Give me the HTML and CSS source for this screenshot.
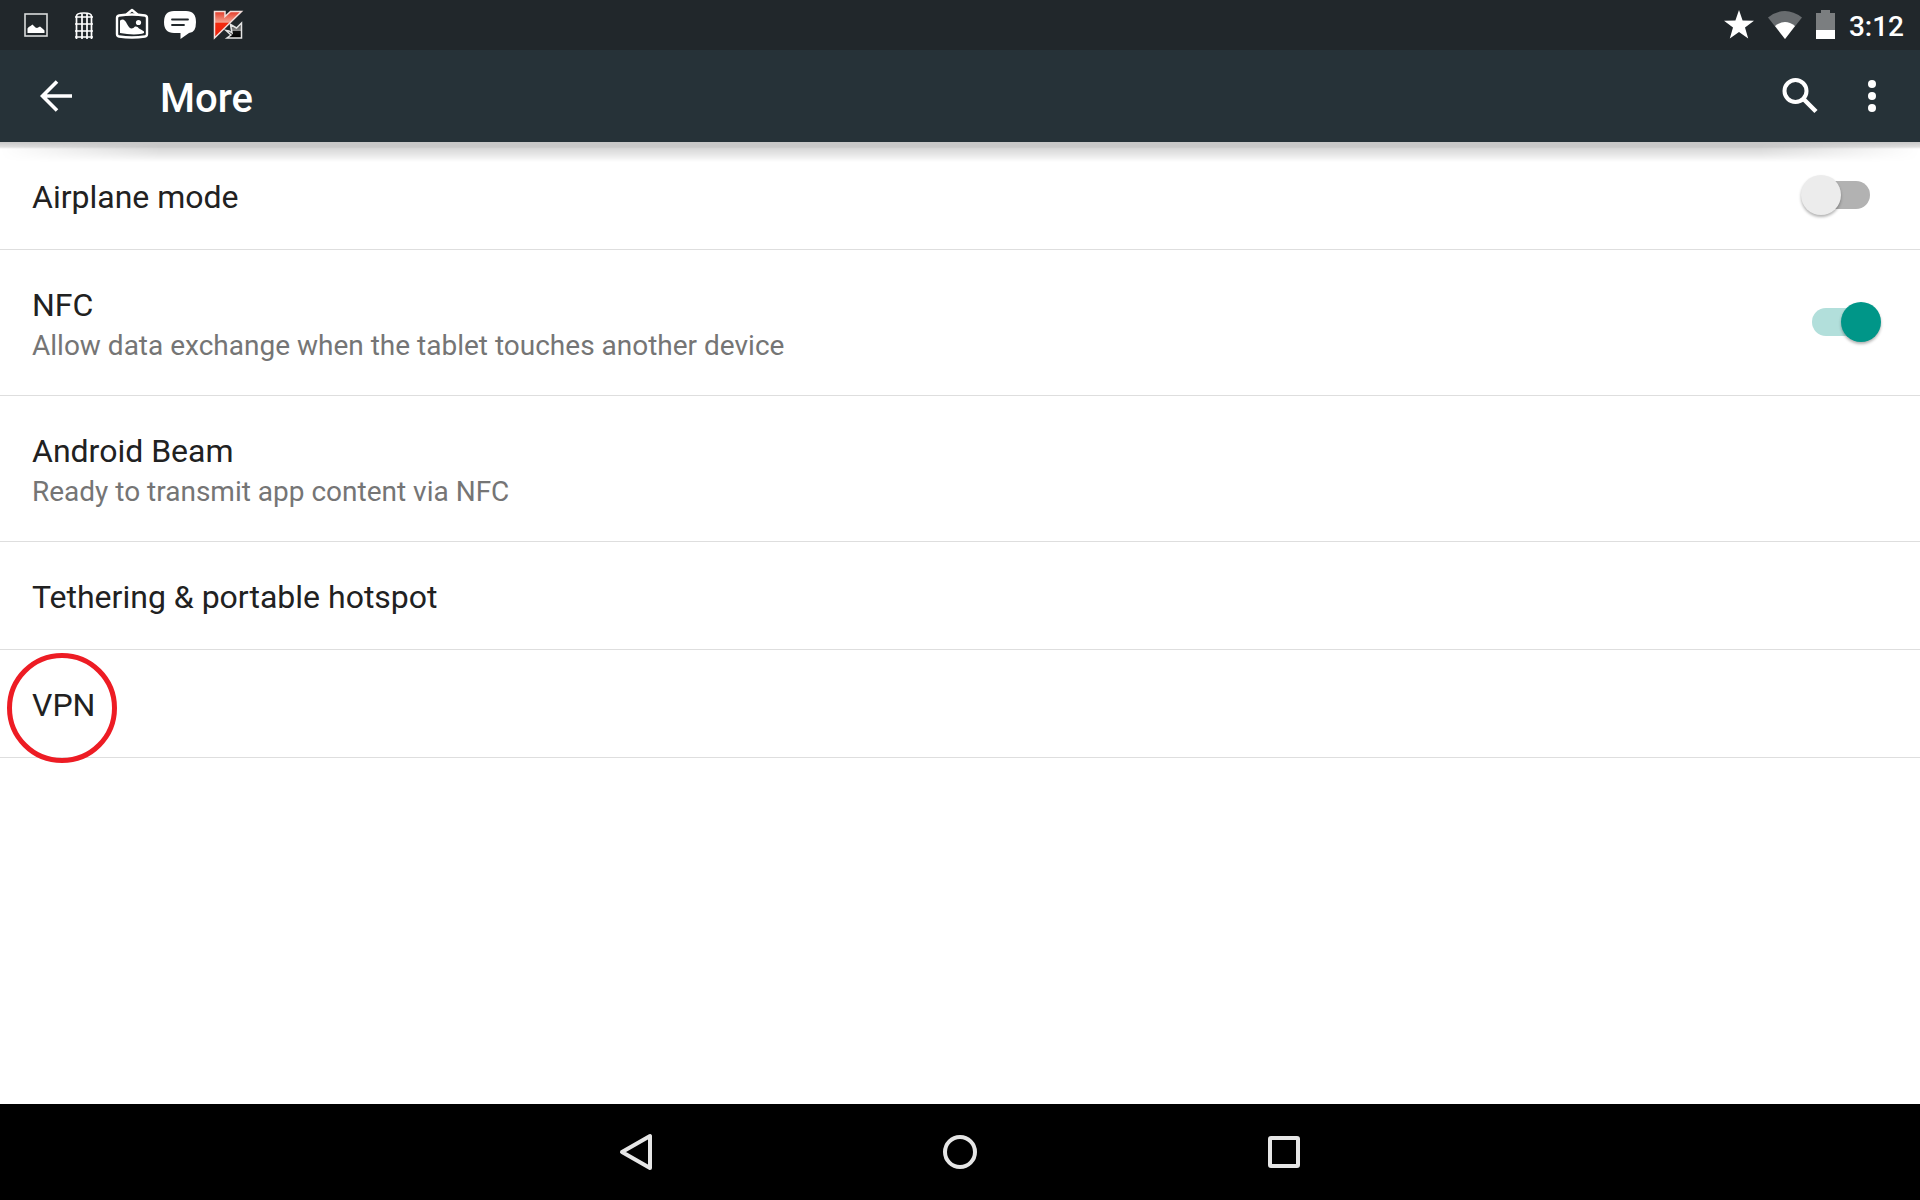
FILE: index.html
```html
<!DOCTYPE html>
<html lang="en">

<head>
    <meta charset="UTF-8">
    <meta name="viewport" content="width=device-width, initial-scale=1.0">
    <title>More</title>
    <link rel="stylesheet" href="styles.css">
</head>

<body>
    <div class="status-bar">
        <div class="notifications">
            <!-- picture -->
            <svg width="48" height="50" viewBox="0 0 48 50">
                <rect x="13" y="14" width="22" height="22" fill="none" stroke="#d9dbdb" stroke-width="1.6" />
                <path d="M15.500 33v-4.500q1-2 3-2.500l2-1.500 3 3 1.500.5 3-1.500 3 2.500 1.500 1.500V33z" fill="#fff" />
            </svg>
            <!-- phone booth -->
            <svg width="48" height="50" viewBox="0 0 48 50">
                <path d="M16.500 39V16q0-3 7.500-3t7.500 3v23M22 14v25M27 14v25M15 17h18M15 24h18M15 31h18M15 37h18" fill="none" stroke="#fff" stroke-width="1.700" />
            </svg>
            <!-- hanging picture -->
            <svg width="48" height="50" viewBox="0 0 48 50">
                <path d="M18.500 14.500l5.500-4.500 5.500 4.500" fill="none" stroke="#fff" stroke-width="2.400" stroke-linejoin="round" />
                <path d="M11 15.500q13-2 26 0 2 .3 2 2.500v16q0 2.200-2 2.500-13 2-26 0-2-.3-2-2.500V18q0-2.200 2-2.500z" fill="none" stroke="#fff" stroke-width="2.400" />
                <path d="M12 33V21q0-1.500 2.500-1.500 2.500 0 4.500 4.500 2.500 4.500 4.500 4.500t3.500-2q2.500-.5 4 2 3 1.500 5 3v1.500l-2 .8q-10 1.500-22-.8z" fill="#fff" />
                <circle cx="30.500" cy="22.500" r="2.600" fill="#fff" />
            </svg>
            <!-- message -->
            <svg width="48" height="50" viewBox="0 0 48 50">
                <path d="M18 11h12q10 0 10 11t-7 11l-8.500 6v-6H18Q8 33 8 22t10-11z" fill="#fff" />
                <path d="M16 19.500h16M16 25h12" fill="none" stroke="#21272b" stroke-width="1.800" stroke-linecap="round" />
            </svg>
            <!-- antivirus -->
            <svg width="48" height="50" viewBox="0 0 48 50">
                <defs>
                    <linearGradient id="red" x1="0" y1="0" x2="0" y2="1">
                        <stop offset="0" stop-color="#e23a28" />
                        <stop offset=".4" stop-color="#f4a08e" />
                        <stop offset=".45" stop-color="#f32a10" />
                        <stop offset="1" stop-color="#e8210c" />
                    </linearGradient>
                    <linearGradient id="dark" x1="0" y1="0" x2="0" y2="1">
                        <stop offset="0" stop-color="#333" />
                        <stop offset=".5" stop-color="#888" />
                        <stop offset=".55" stop-color="#111" />
                        <stop offset="1" stop-color="#000" />
                    </linearGradient>
                </defs>
                <path d="M10.500 11.500H21v5l5.500-5H37.500L10.500 38z" fill="url(#red)" stroke="#f3dedb" stroke-width="1.500" />
                <path d="M26.500 24.500l6 3.500 5-5V38H23l4-3-5-4.500 3 .5 3 2z" fill="url(#dark)" stroke="#e4e4e4" stroke-width="1.500" />
            </svg>
        </div>
        <div class="system">
            <svg width="30" height="50" viewBox="0 0 30 50">
                <path d="M15 10l3.600 10.600L30 20.800l-9 6.800L24.200 38.500 15 32l-9.200 6.500L9 27.600 0 20.800l11.400-.2z" fill="#fff" />
            </svg>
            <svg width="34" height="50" viewBox="0 0 34 50">
                <path d="M0 17.500Q17 4.500 34 17.500L17 39z" fill="#686c6f" />
                <path d="M7 26q10-8 20 0L17 39z" fill="#fff" />
            </svg>
            <svg width="19" height="50" viewBox="0 0 19 50">
                <path d="M0 13h5v-3h9v3h5v17H0z" fill="#7b7e80" />
                <path d="M0 30h19v9H0z" fill="#fff" />
            </svg>
            <span class="clock">3:12</span>
        </div>
    </div>

    <header class="app-bar">
        <button class="icon-button" aria-label="Back">
            <svg width="32" height="32" viewBox="0 0 32 32">
                <path d="M17 1.500L2.500 16 17 30.500M3 16h29" fill="none" stroke="#fff" stroke-width="3.600" />
            </svg>
        </button>
        <h1>More</h1>
        <button class="icon-button" aria-label="Search">
            <svg width="36" height="36" viewBox="0 0 36 36">
                <circle cx="13.500" cy="13" r="11" fill="none" stroke="#fff" stroke-width="4" />
                <path d="M22 21.500L34 33.500" stroke="#fff" stroke-width="4.500" />
            </svg>
        </button>
        <button class="icon-button" aria-label="More options">
            <svg width="8" height="32" viewBox="0 0 8 32">
                <g fill="#fff">
                    <circle cx="4" cy="4" r="4" />
                    <circle cx="4" cy="16" r="4" />
                    <circle cx="4" cy="28" r="4" />
                </g>
            </svg>
        </button>
    </header>

    <main class="settings">
        <div class="row">
            <label class="text" for="airplane">
                <span class="title">Airplane mode</span>
            </label>
            <input type="checkbox" class="switch" id="airplane">
        </div>
        <div class="row row-tall">
            <label class="text" for="nfc">
                <span class="title">NFC</span>
                <span class="summary">Allow data exchange when the tablet touches another device</span>
            </label>
            <input type="checkbox" class="switch" id="nfc" checked>
        </div>
        <a class="row row-tall" href="#beam">
            <span class="text">
                <span class="title">Android Beam</span>
                <span class="summary">Ready to transmit app content via NFC</span>
            </span>
        </a>
        <a class="row" href="#tethering">
            <span class="text">
                <span class="title">Tethering &amp; portable hotspot</span>
            </span>
        </a>
        <a class="row marked" href="#vpn">
            <span class="text">
                <span class="title">VPN</span>
            </span>
        </a>
    </main>

    <nav class="nav-bar">
        <button class="nav-button" aria-label="Back">
            <svg width="36" height="40" viewBox="0 0 36 40">
                <path d="M4 20L32 4v32z" fill="none" stroke="#e6e6e6" stroke-width="4" stroke-linejoin="round" />
            </svg>
        </button>
        <button class="nav-button" aria-label="Home">
            <svg width="36" height="36" viewBox="0 0 36 36">
                <circle cx="18" cy="18" r="15" fill="none" stroke="#e6e6e6" stroke-width="4" />
            </svg>
        </button>
        <button class="nav-button" aria-label="Recent apps">
            <svg width="32" height="32" viewBox="0 0 32 32">
                <rect x="2" y="2" width="28" height="28" rx="1" fill="none" stroke="#e6e6e6" stroke-width="4" />
            </svg>
        </button>
    </nav>
</body>

</html>
```

FILE: styles.css
```css
*,
*::before,
*::after {
    margin: 0;
    padding: 0;
    box-sizing: border-box;
}

body {
    font-family: Roboto, sans-serif;
    background-color: #fff;
    color: #212121;
    display: flex;
    flex-direction: column;
    min-height: 100vh;
}

button {
    background: transparent;
    border: none;
    cursor: pointer;
}

svg {
    display: block;
}

.status-bar {
    display: flex;
    justify-content: space-between;
    height: 50px;
    padding: 0 16px 0 12px;
    background-color: #21272b;
    color: #fff;
}

.notifications {
    display: flex;
}

.system {
    display: flex;
    align-items: center;
    gap: 14px;
}

.clock {
    font-size: 28px;
    font-weight: 500;
    line-height: 32px;
    padding-top: 4px;
}

.app-bar {
    position: relative;
    display: flex;
    align-items: center;
    height: 92px;
    padding: 0 12px 0 20px;
    background-color: #263238;
    color: #fff;
}

/* shadow under the bar, thinner towards both ends */
.app-bar::before,
.app-bar::after {
    content: "";
    position: absolute;
    left: 0;
    right: 0;
    top: 100%;
    pointer-events: none;
}

.app-bar::before {
    height: 7px;
    background: linear-gradient(rgba(0, 0, 0, 0.22), rgba(0, 0, 0, 0.12) 70%, transparent);
}

.app-bar::after {
    height: 20px;
    background: linear-gradient(transparent, rgba(0, 0, 0, 0.15) 7px, rgba(0, 0, 0, 0.09) 13px, transparent);
    -webkit-mask-image: linear-gradient(90deg, transparent, #000 160px, #000 calc(100% - 160px), transparent);
    mask-image: linear-gradient(90deg, transparent, #000 160px, #000 calc(100% - 160px), transparent);
}

.app-bar h1 {
    flex: 1;
    margin-left: 68px;
    padding-top: 6px;
    font-size: 40px;
    font-weight: 500;
    line-height: 48px;
}

.icon-button {
    display: flex;
    align-items: center;
    justify-content: center;
    width: 72px;
    height: 72px;
}

.settings {
    flex: 1;
}

.row {
    display: flex;
    align-items: center;
    justify-content: space-between;
    min-height: 108px;
    padding: 0 38px 0 32px;
    border-bottom: 1px solid #dedede;
    color: #212121;
    text-decoration: none;
}

.row-tall {
    min-height: 146px;
}

.text {
    flex: 1;
    padding-top: 2px;
}

.row-tall .text {
    padding-top: 6px;
}

.title,
.summary {
    display: block;
}

.title {
    font-size: 32px;
    line-height: 40px;
}

.summary {
    font-size: 28px;
    line-height: 42px;
    color: #757575;
}

.switch {
    appearance: none;
    position: relative;
    width: 82px;
    height: 40px;
    margin-bottom: 2px;
    cursor: pointer;
}

.switch::before,
.switch::after {
    content: "";
    position: absolute;
}

.switch::before {
    left: 12px;
    top: 6px;
    width: 58px;
    height: 28px;
    border-radius: 14px;
    background-color: #b2b2b2;
}

.switch::after {
    left: 1px;
    top: 0;
    width: 40px;
    height: 40px;
    border-radius: 50%;
    background-color: #ececec;
    box-shadow: 0 2px 3px rgba(0, 0, 0, 0.3);
}

.switch:checked::before {
    background-color: #b2dfdb;
}

.switch:checked::after {
    left: 41px;
    background-color: #009688;
}

.marked {
    position: relative;
}

.marked::after {
    content: "";
    position: absolute;
    left: 7px;
    top: 3px;
    width: 110px;
    height: 110px;
    border: 5px solid #ed1c24;
    border-radius: 50%;
}

.nav-bar {
    display: flex;
    align-items: center;
    justify-content: center;
    gap: 164px;
    height: 96px;
    background-color: #000;
}

.nav-button {
    display: flex;
    align-items: center;
    justify-content: center;
    width: 160px;
    height: 96px;
}
```
